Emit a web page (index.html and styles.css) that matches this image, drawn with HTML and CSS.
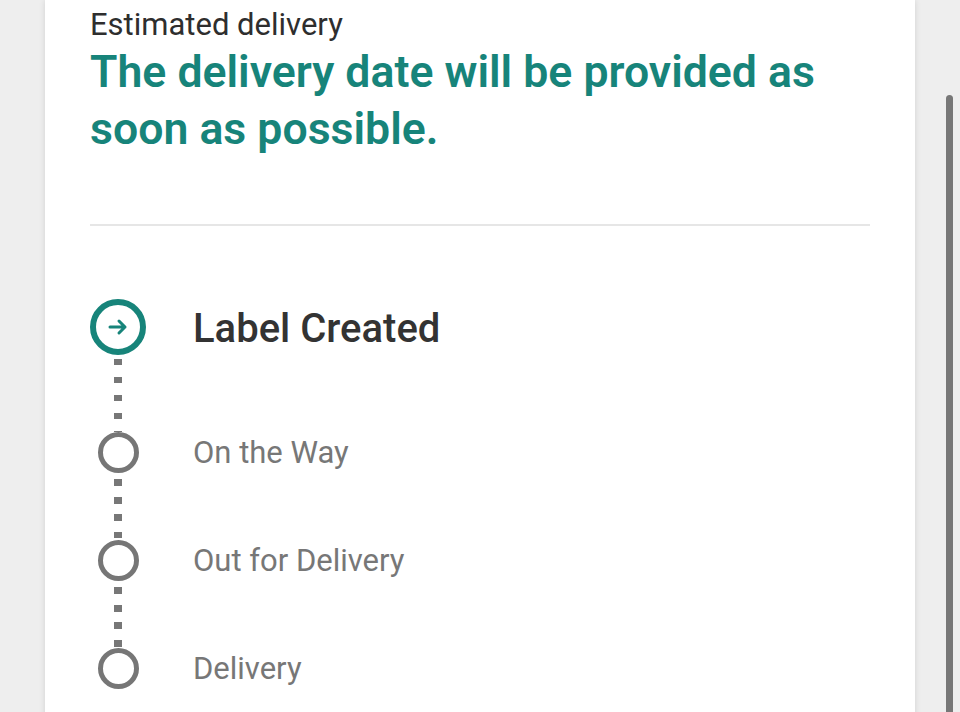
FILE: index.html
```html
<!DOCTYPE html>
<html lang="en">
<head>
<meta charset="utf-8">
<link rel="stylesheet" href="styles.css">
<title>Tracking</title>
</head>
<body>
<main class="card">
  <p class="eyebrow">Estimated delivery</p>
  <h1 class="headline">The delivery date will be provided as soon as possible.</h1>
  <hr class="divider">
  <ol class="timeline">
    <li class="marker marker-active">
      <svg viewBox="0 0 24 24" width="24" height="24" aria-hidden="true"><path d="M4 12h15M13 6l6 6-6 6" fill="none" stroke="#17847a" stroke-width="3" stroke-linecap="round" stroke-linejoin="round"/></svg>
    </li>
    <li class="label label-active">Label Created</li>
    <li class="connector connector-first"></li>
    <li class="marker"></li>
    <li class="label">On the Way</li>
    <li class="connector"></li>
    <li class="marker"></li>
    <li class="label">Out for Delivery</li>
    <li class="connector"></li>
    <li class="marker"></li>
    <li class="label">Delivery</li>
  </ol>
</main>
<div class="scroll-thumb"></div>
</body>
</html>
```

FILE: styles.css
```css
html, body {
  margin: 0;
  padding: 0;
  height: 100%;
  overflow: hidden;
}
body {
  background: #eeeeee;
  font-family: Roboto, "Noto Sans", "Liberation Sans", sans-serif;
}
.card {
  margin-left: 45px;
  width: 870px;
  min-height: 760px;
  box-sizing: border-box;
  padding: 7px 45px 40px;
  background: #ffffff;
  box-shadow: 0 0 6px rgba(0, 0, 0, 0.12);
}
.eyebrow {
  margin: 0;
  font-size: 31px;
  line-height: 36px;
  color: #2e2e2e;
  font-weight: 400;
}
.headline {
  margin: 1px 0 0;
  font-size: 44.6px;
  line-height: 57px;
  font-weight: 600;
  color: #17847a;
}
.divider {
  margin: 66px 0 0;
  border: 0;
  height: 2px;
  background: #e6e6e6;
}
.timeline {
  list-style: none;
  margin: 73px 0 0;
  padding: 0;
  display: grid;
  grid-template-columns: 56px 1fr;
  column-gap: 47px;
  align-items: center;
}
.marker {
  grid-column: 1;
  justify-self: center;
  width: 41px;
  height: 41px;
  box-sizing: border-box;
  border: 5px solid #767676;
  border-radius: 50%;
}
.marker-active {
  width: 56px;
  height: 56px;
  border: 6px solid #17847a;
  display: flex;
  align-items: center;
  justify-content: center;
}
.label {
  grid-column: 2;
  font-size: 31px;
  line-height: 40px;
  color: #777777;
}
.label-active {
  font-size: 40px;
  font-weight: 500;
  color: #333333;
  position: relative;
  top: 2px;
}
.connector {
  grid-column: 1;
  justify-self: center;
  width: 8px;
  height: 67px;
  background: repeating-linear-gradient(to bottom, transparent 0 6px, #777777 6px 13px, transparent 13px 17.5px);
}
.connector-first {
  height: 77px;
  background: repeating-linear-gradient(to bottom, transparent 0 4px, #777777 4px 10px, transparent 10px 18px);
}
.scroll-thumb {
  position: fixed;
  left: 946px;
  top: 95px;
  width: 7px;
  height: 640px;
  border-radius: 4px;
  background: #777777;
}
```
